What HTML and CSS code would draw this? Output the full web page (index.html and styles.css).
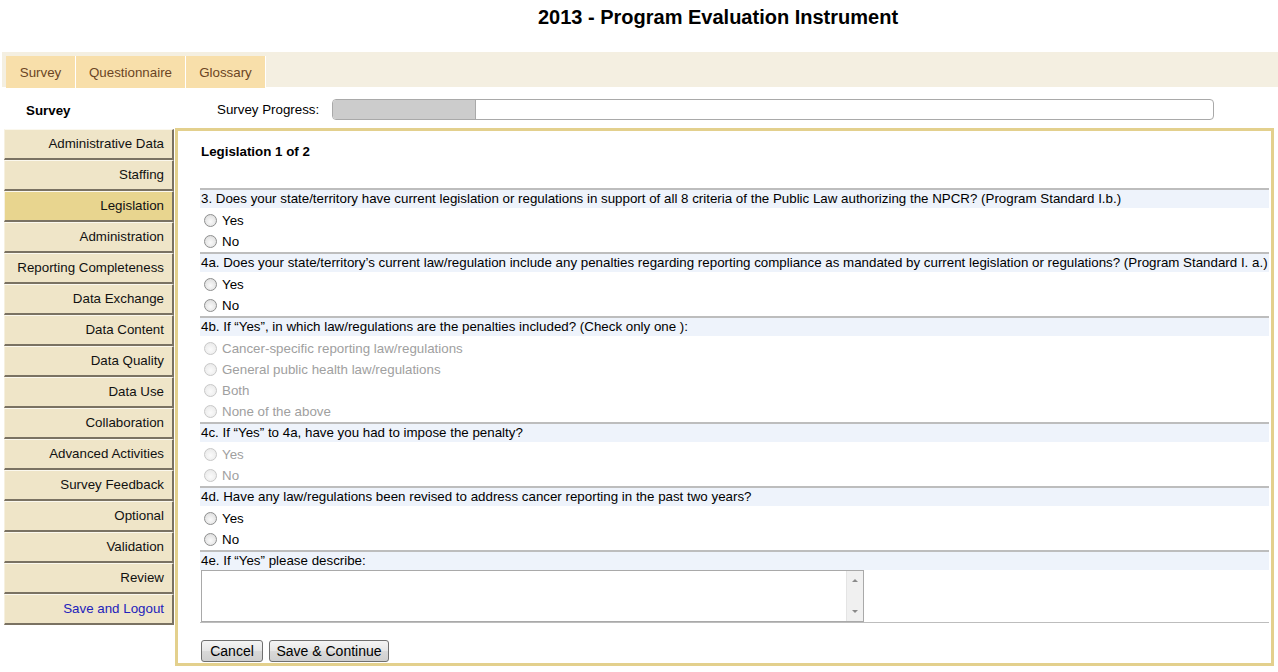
FILE: index.html
```html
<!DOCTYPE html>
<html>
<head>
<meta charset="utf-8">
<title>2013 - Program Evaluation Instrument</title>
<link rel="stylesheet" href="styles.css">
</head>
<body>
<div class="title">2013 - Program Evaluation Instrument</div>
<div class="tabbar">
  <a class="tab">Survey</a>
  <a class="tab">Questionnaire</a>
  <a class="tab">Glossary</a>
</div>
<div class="layout">
  <div class="side-head">Survey</div>
  <div class="progress-row">
    <span class="progress-label">Survey Progress:</span>
    <div class="progress"><div class="progress-fill" style="width:142px"></div></div>
  </div>
  <nav class="nav">
    <a class="nav-item">Administrative Data</a>
    <a class="nav-item">Staffing</a>
    <a class="nav-item active">Legislation</a>
    <a class="nav-item">Administration</a>
    <a class="nav-item">Reporting Completeness</a>
    <a class="nav-item">Data Exchange</a>
    <a class="nav-item">Data Content</a>
    <a class="nav-item">Data Quality</a>
    <a class="nav-item">Data Use</a>
    <a class="nav-item">Collaboration</a>
    <a class="nav-item">Advanced Activities</a>
    <a class="nav-item">Survey Feedback</a>
    <a class="nav-item">Optional</a>
    <a class="nav-item">Validation</a>
    <a class="nav-item">Review</a>
    <a class="nav-item logout">Save and Logout</a>
  </nav>
  <main class="panel">
    <div class="section-title">Legislation 1 of 2</div>
    <div class="q">
      <div class="qh">3. Does your state/territory have current legislation or regulations in support of all 8 criteria of the Public Law authorizing the NPCR? (Program Standard I.b.)</div>
      <label class="opt"><input type="radio" name="q3"><span>Yes</span></label>
      <label class="opt"><input type="radio" name="q3"><span>No</span></label>
    </div>
    <div class="q">
      <div class="qh">4a. Does your state/territory’s current law/regulation include any penalties regarding reporting compliance as mandated by current legislation or regulations? (Program Standard I. a.)</div>
      <label class="opt"><input type="radio" name="q4a"><span>Yes</span></label>
      <label class="opt"><input type="radio" name="q4a"><span>No</span></label>
    </div>
    <div class="q">
      <div class="qh">4b. If “Yes”, in which law/regulations are the penalties included? (Check only one ):</div>
      <label class="opt disabled"><input type="radio" name="q4b" disabled><span>Cancer-specific reporting law/regulations</span></label>
      <label class="opt disabled"><input type="radio" name="q4b" disabled><span>General public health law/regulations</span></label>
      <label class="opt disabled"><input type="radio" name="q4b" disabled><span>Both</span></label>
      <label class="opt disabled"><input type="radio" name="q4b" disabled><span>None of the above</span></label>
    </div>
    <div class="q">
      <div class="qh">4c. If “Yes” to 4a, have you had to impose the penalty?</div>
      <label class="opt disabled"><input type="radio" name="q4c" disabled><span>Yes</span></label>
      <label class="opt disabled"><input type="radio" name="q4c" disabled><span>No</span></label>
    </div>
    <div class="q">
      <div class="qh">4d. Have any law/regulations been revised to address cancer reporting in the past two years?</div>
      <label class="opt"><input type="radio" name="q4d"><span>Yes</span></label>
      <label class="opt"><input type="radio" name="q4d"><span>No</span></label>
    </div>
    <div class="q last">
      <div class="qh tight">4e. If “Yes” please describe:</div>
      <div class="ta-wrap">
        <div class="ta">
          <div class="ta-scroll">
            <span class="arr up"></span>
            <span class="arr down"></span>
          </div>
        </div>
      </div>
    </div>
    <div class="actions">
      <button class="btn cancel">Cancel</button>
      <button class="btn save">Save &amp; Continue</button>
    </div>
  </main>
</div>
</body>
</html>
```
FILE: styles.css
```css
html, body {
  margin: 0;
  padding: 0;
  background: #ffffff;
  font-family: "Liberation Sans", Arial, sans-serif;
  font-size: 13.333px;
  color: #000;
}

.title {
  height: 52px;
  box-sizing: border-box;
  padding: 5px 0 0 158px;
  text-align: center;
  font-size: 20px;
  font-weight: bold;
  line-height: 24px;
  color: #000;
}

.tabbar {
  margin-left: 2px;
  height: 35px;
  background: #f4efe1;
  display: flex;
  padding: 4px 0 0 4px;
  box-sizing: border-box;
}

.tab {
  height: 32px;
  line-height: 33px;
  background: #f8dfaa;
  color: #6b4524;
  border-right: 1px solid #fff;
  text-align: center;
  flex: none;
}
.tab:nth-child(1) { width: 69px; }
.tab:nth-child(2) { width: 109px; }
.tab:nth-child(3) { width: 79px; }

.layout {
  display: grid;
  grid-template-columns: 175px 1099px;
  grid-template-rows: 41px auto;
}

.side-head {
  font-weight: bold;
  padding-left: 26px;
  padding-top: 2px;
  line-height: 44px;
}

.progress-row {
  display: flex;
  align-items: center;
  padding-left: 42px;
  padding-top: 4px;
}
.progress-label {
  width: 115px;
  flex: none;
}
.progress {
  width: 880px;
  height: 19px;
  border: 1px solid #a9a9a9;
  border-radius: 4px;
  overflow: hidden;
  background: #fff;
}
.progress-fill {
  height: 100%;
  background: #cccccc;
  border-right: 1px solid #a9a9a9;
}

.nav {
  display: flex;
  flex-direction: column;
  padding-left: 4px;
  padding-top: 1px;
}
.nav-item {
  display: block;
  width: 159px;
  height: 27px;
  line-height: 27px;
  padding: 0 8px 1px 0;
  box-sizing: content-box;
  background: #efe5c8;
  border-top: 1px solid #fbf8ee;
  border-bottom: 2px solid #7a7262;
  border-right: 2px solid #7a7262;
  border-left: 1px solid #f6f0df;
  text-align: right;
  color: #111;
}
.nav-item.active {
  background: #e8d58f;
}
.nav-item.logout {
  color: #2222bb;
}

.panel {
  border: 3px solid #e3d08d;
  height: 520px;
  padding: 12px 2px 0 22px;
  box-sizing: content-box;
}

.section-title {
  font-weight: bold;
  line-height: 17px;
  height: 45px;
  padding-left: 1px;
}

.q {
  border-top: 2px solid #bdbdbd;
}
.qh {
  background: #eef3fb;
  height: 18px;
  line-height: 18px;
  padding-left: 1px;
  margin-bottom: 2px;
  white-space: nowrap;
}
.qh.tight {
  margin-bottom: 0;
}
.opt {
  display: flex;
  align-items: center;
  height: 21px;
  padding-left: 4px;
}
.opt input {
  appearance: none;
  -webkit-appearance: none;
  margin: 0 5px 0 0;
  width: 13px;
  height: 13px;
  border-radius: 50%;
  border: 1px solid #8e8f8f;
  box-sizing: border-box;
  background: radial-gradient(circle at 50% 60%, #fafafa 0%, #e2e2e2 70%, #cfcfcf 100%);
}
.opt.disabled input {
  border-color: #c8c8c8;
  background: radial-gradient(circle at 50% 60%, #fbfbfb 0%, #ececec 70%, #e2e2e2 100%);
}
.opt.disabled span {
  color: #a0a0a0;
}

.q.last {
  border-bottom: 1px solid #bdbdbd;
}
.ta-wrap {
  padding: 0 0 0 1px;
}
.ta {
  width: 661px;
  height: 50px;
  border: 1px solid #a9a9a9;
  background: #fff;
  display: flex;
  justify-content: flex-end;
}
.ta-scroll {
  width: 16px;
  height: 100%;
  background: #f0f0f0;
  border-left: 1px solid #e4e4e4;
  position: relative;
}
.arr {
  position: absolute;
  left: 5px;
  width: 0;
  height: 0;
  border-left: 3px solid transparent;
  border-right: 3px solid transparent;
}
.arr.up {
  top: 8px;
  border-bottom: 3px solid #8a8a8a;
}
.arr.down {
  bottom: 8px;
  border-top: 3px solid #8a8a8a;
}

.actions {
  display: flex;
  gap: 6px;
  padding: 17px 0 0 1px;
}
.btn {
  font-family: "Liberation Sans", Arial, sans-serif;
  font-size: 14px;
  color: #000;
  height: 22px;
  padding: 0;
  border: 1px solid #707070;
  border-radius: 3px;
  background: linear-gradient(#f4f4f4, #e6e6e6 50%, #d9d9d9 51%, #cfcfcf);
}
.btn.cancel { width: 62px; }
.btn.save { width: 120px; }
```
